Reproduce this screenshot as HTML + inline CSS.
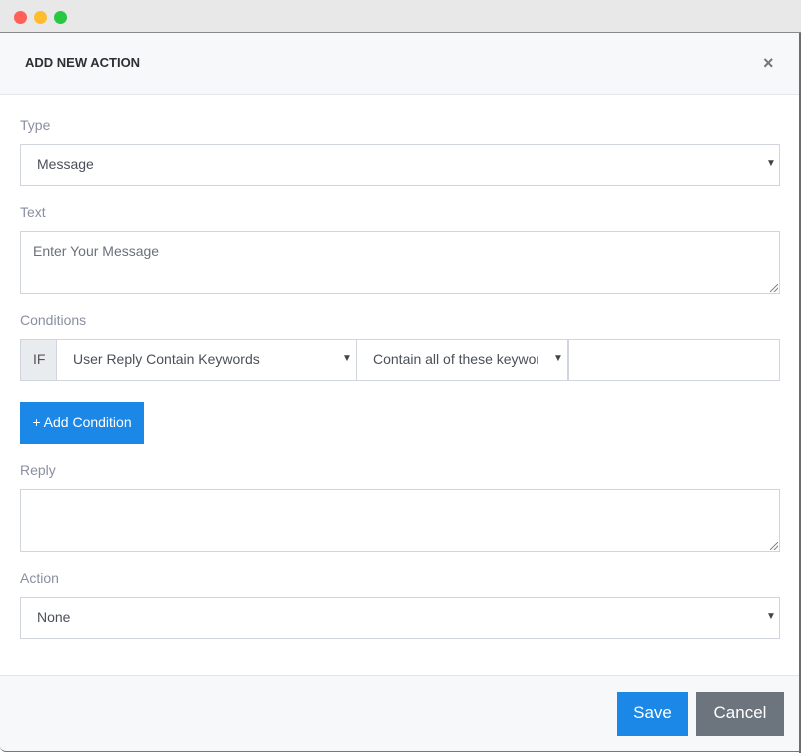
<!DOCTYPE html>
<html><head><style>
*{box-sizing:border-box;margin:0;padding:0}
body{width:801px;height:753px;background:#fff;font-family:"Liberation Sans",sans-serif;position:relative;overflow:hidden}
.a{position:absolute}
.tb{left:0;top:0;width:801px;height:33px;background:#e8e8e8;border-bottom:1px solid #8a8a8a}
.dot{top:11px;width:13px;height:13px;border-radius:50%}
.hdr{left:0;top:33px;width:799px;height:62px;background:#f7f8fa;border-bottom:1px solid #e4e6ea}
.ftr{left:0;top:675px;width:799px;height:77px;background:#f7f8fa;border-top:1px solid #e4e6ea;border-bottom:1px solid #777;border-radius:0 0 0 6px}
.rb{left:799px;top:33px;width:2px;height:720px;background:#6d6d6d}
.lbl{left:20px;font-size:14px;color:#8a8fa0}
.box{left:20px;width:760px;border:1px solid #d0d5dd;background:#fff;font-size:14px;color:#4a4f58}
.car{font-size:10px;color:#444}
.btn{color:#fff;font-size:17px;text-align:center}
.grip{width:8px;height:8px;background:linear-gradient(135deg,transparent 45%,#888 45%,#888 55%,transparent 55%,transparent 70%,#888 70%,#888 80%,transparent 80%)}
</style></head><body>
<div class="a tb"></div>
<div class="a dot" style="left:14px;background:#fe5f57"></div>
<div class="a dot" style="left:34px;background:#febc2e"></div>
<div class="a dot" style="left:54px;background:#28c840"></div>
<div class="a hdr"></div>
<div class="a" style="left:25px;top:55px;font-size:13px;font-weight:bold;color:#2d2f33">ADD NEW ACTION</div>
<div class="a" style="left:763px;top:53px;font-size:18px;font-weight:bold;color:#777">×</div>
<div class="a rb"></div>

<div class="a lbl" style="top:117px">Type</div>
<div class="a box" style="top:144px;height:42px;padding:11px 16px">Message</div>
<div class="a car" style="left:766px;top:158px">▼</div>

<div class="a lbl" style="top:204px">Text</div>
<div class="a box" style="top:231px;height:63px;padding:11px 12px;color:#6b707a">Enter Your Message</div>
<div class="a grip" style="left:770px;top:284px"></div>

<div class="a lbl" style="top:312px">Conditions</div>
<div class="a" style="left:20px;top:339px;width:760px;height:42px;border:1px solid #d0d5dd"></div>
<div class="a" style="left:21px;top:340px;width:36px;height:40px;background:#e9ecef;border-right:1px solid #d0d5dd;font-size:14px;color:#555;padding:11px 0 0 12px">IF</div>
<div class="a" style="left:73px;top:351px;font-size:14px;color:#4a4f58">User Reply Contain Keywords</div>
<div class="a car" style="left:342px;top:353px">▼</div>
<div class="a" style="left:356px;top:340px;width:1px;height:40px;background:#d0d5dd"></div>
<div class="a" style="left:373px;top:351px;font-size:14px;color:#4a4f58;width:165px;overflow:hidden;white-space:nowrap">Contain all of these keywords</div>
<div class="a car" style="left:553px;top:353px">▼</div>
<div class="a" style="left:567px;top:340px;width:2px;height:40px;background:#d0d5dd"></div>

<div class="a btn" style="left:20px;top:402px;width:124px;height:42px;background:#1b87e6;font-size:14px;padding-top:12px">+ Add Condition</div>

<div class="a lbl" style="top:462px">Reply</div>
<div class="a box" style="top:489px;height:63px"></div>
<div class="a grip" style="left:770px;top:542px"></div>

<div class="a lbl" style="top:570px">Action</div>
<div class="a box" style="top:597px;height:42px;padding:11px 16px">None</div>
<div class="a car" style="left:766px;top:611px">▼</div>

<div class="a ftr"></div>
<div class="a btn" style="left:617px;top:692px;width:71px;height:44px;background:#1b87e6;padding-top:11px">Save</div>
<div class="a btn" style="left:696px;top:692px;width:88px;height:44px;background:#6c757d;padding-top:11px">Cancel</div>
</body></html>
